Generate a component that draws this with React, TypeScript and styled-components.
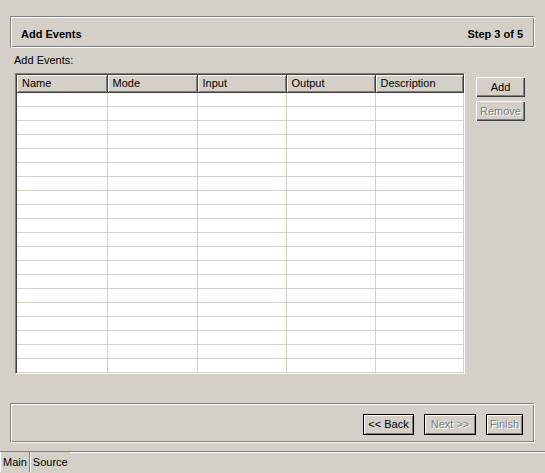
import React from 'react';
import styled, { createGlobalStyle, css } from 'styled-components';

const FACE = '#d4d0c8';
const SHADOW = '#808080';
const DARK = '#404040';

const GlobalStyle = createGlobalStyle`
  html, body {
    margin: 0;
    padding: 0;
    background: ${FACE};
  }
  body {
    font-family: 'Liberation Sans', Arial, sans-serif;
    font-size: 11px;
    color: #000;
  }
`;

const Page = styled.div`
  width: 545px;
  height: 473px;
  display: flex;
  flex-direction: column;
  background: ${FACE};
  overflow: hidden;
`;

const Body = styled.div`
  flex: 1;
  display: flex;
  flex-direction: column;
  padding: 16px 10px 0 10px;
`;

const etched = css`
  border-top: 1px solid ${SHADOW};
  border-left: 1px solid ${SHADOW};
  border-bottom: 1px solid #fff;
  border-right: 1px solid #fff;
  box-shadow: inset 1px 1px 0 #fff, inset -1px -1px 0 ${SHADOW};
`;

const TitlePanel = styled.div`
  ${etched};
  height: 32px;
  box-sizing: border-box;
  display: flex;
  align-items: center;
  justify-content: space-between;
  padding: 3px 11px 0 10px;
  font-weight: bold;
`;

const Label = styled.div`
  margin: 5px 0 0 4px;
  height: 14px;
  line-height: 14px;
`;

const EditorRow = styled.div`
  display: flex;
  gap: 11px;
  margin: 6px 0 0 5px;
`;

const TableFrame = styled.div`
  width: 450px;
  height: 301px;
  box-sizing: border-box;
  border-top: 1px solid ${SHADOW};
  border-left: 1px solid ${SHADOW};
  border-bottom: 1px solid #fff;
  border-right: 1px solid #fff;
  box-shadow: inset 1px 1px 0 ${DARK}, inset -1px -1px 0 ${FACE};
  padding: 1px;
  background: #fff;
  overflow: hidden;
`;

const Grid = styled.table`
  border-collapse: collapse;
  table-layout: fixed;
  width: 446px;
`;

const HeadCell = styled.th<{ $w: number }>`
  width: ${p => p.$w}px;
  height: 17px;
  box-sizing: border-box;
  padding: 0 0 0 5px;
  text-align: left;
  font-weight: normal;
  background: ${FACE};
  border-right: 1px solid ${DARK};
  border-bottom: 1px solid ${DARK};
  box-shadow: inset 1px 1px 0 #fff, inset -1px -1px 0 ${SHADOW};
  white-space: nowrap;
  overflow: hidden;
`;

const Cell = styled.td`
  height: 14px;
  padding: 0;
  box-sizing: border-box;
  border-right: 1px solid ${FACE};
  border-bottom: 1px solid ${FACE};
`;

const SideButtons = styled.div`
  display: flex;
  flex-direction: column;
  gap: 4px;
  padding-top: 4px;
`;

const Button = styled.button<{ $disabled?: boolean; $framed?: boolean; $w: number }>`
  width: ${p => p.$w}px;
  height: ${p => (p.$framed ? 21 : 20)}px;
  box-sizing: border-box;
  margin: 0;
  padding: 0;
  font-family: inherit;
  font-size: 11px;
  background: ${FACE};
  color: ${p => (p.$disabled ? SHADOW : '#000')};
  text-shadow: ${p => (p.$disabled ? '1px 1px 0 #fff' : 'none')};
  border: ${p => (p.$framed ? '1px solid #000' : 'none')};
  box-shadow: ${p =>
    p.$framed
      ? `inset 1px 1px 0 #fff, inset -1px -1px 0 ${SHADOW}`
      : `inset 1px 1px 0 #fff, inset -1px -1px 0 ${DARK}, inset -2px -2px 0 ${SHADOW}`};
  cursor: default;
`;

const Spacer = styled.div`
  flex: 1;
`;

const FooterPanel = styled.div`
  ${etched};
  height: 40px;
  box-sizing: border-box;
  display: flex;
  align-items: center;
  justify-content: flex-end;
  gap: 10px;
  padding: 2px 11px 0 0;
  margin-bottom: 8px;
`;

const TabBar = styled.div`
  height: 21px;
  border-top: 1px solid ${SHADOW};
  box-shadow: inset 0 1px 0 #fff;
  display: flex;
`;

const Tab = styled.div<{ $active?: boolean }>`
  height: 20px;
  line-height: 20px;
  padding: 0 2px 0 ${p => (p.$active ? '3px' : '2px')};
  background: ${FACE};
  ${p =>
    p.$active &&
    css`
      border-right: 1px solid ${SHADOW};
      box-shadow: inset 1px 0 0 #fff, 1px 0 0 #fff;
      margin-right: 1px;
    `}
`;

const columns = [
  { name: 'Name', w: 90 },
  { name: 'Mode', w: 90 },
  { name: 'Input', w: 89 },
  { name: 'Output', w: 89 },
  { name: 'Description', w: 88 },
];

const rows = Array.from({ length: 20 }, (_, i) => i);

export default function App() {
  return (
    <>
      <GlobalStyle />
      <Page>
        <Body>
          <TitlePanel>
            <span>Add Events</span>
            <span>Step 3 of 5</span>
          </TitlePanel>
          <Label>Add Events:</Label>
          <EditorRow>
            <TableFrame>
              <Grid>
                <thead>
                  <tr>
                    {columns.map(c => (
                      <HeadCell key={c.name} $w={c.w}>
                        {c.name}
                      </HeadCell>
                    ))}
                  </tr>
                </thead>
                <tbody>
                  {rows.map(r => (
                    <tr key={r}>
                      {columns.map(c => (
                        <Cell key={c.name} />
                      ))}
                    </tr>
                  ))}
                </tbody>
              </Grid>
            </TableFrame>
            <SideButtons>
              <Button $w={49}>Add</Button>
              <Button $w={49} $disabled>
                Remove
              </Button>
            </SideButtons>
          </EditorRow>
          <Spacer />
          <FooterPanel>
            <Button $w={51} $framed>
              &lt;&lt; Back
            </Button>
            <Button $w={52} $framed $disabled>
              Next &gt;&gt;
            </Button>
            <Button $w={37} $framed $disabled>
              Finish
            </Button>
          </FooterPanel>
        </Body>
        <TabBar>
          <Tab $active>Main</Tab>
          <Tab>Source</Tab>
        </TabBar>
      </Page>
    </>
  );
}
